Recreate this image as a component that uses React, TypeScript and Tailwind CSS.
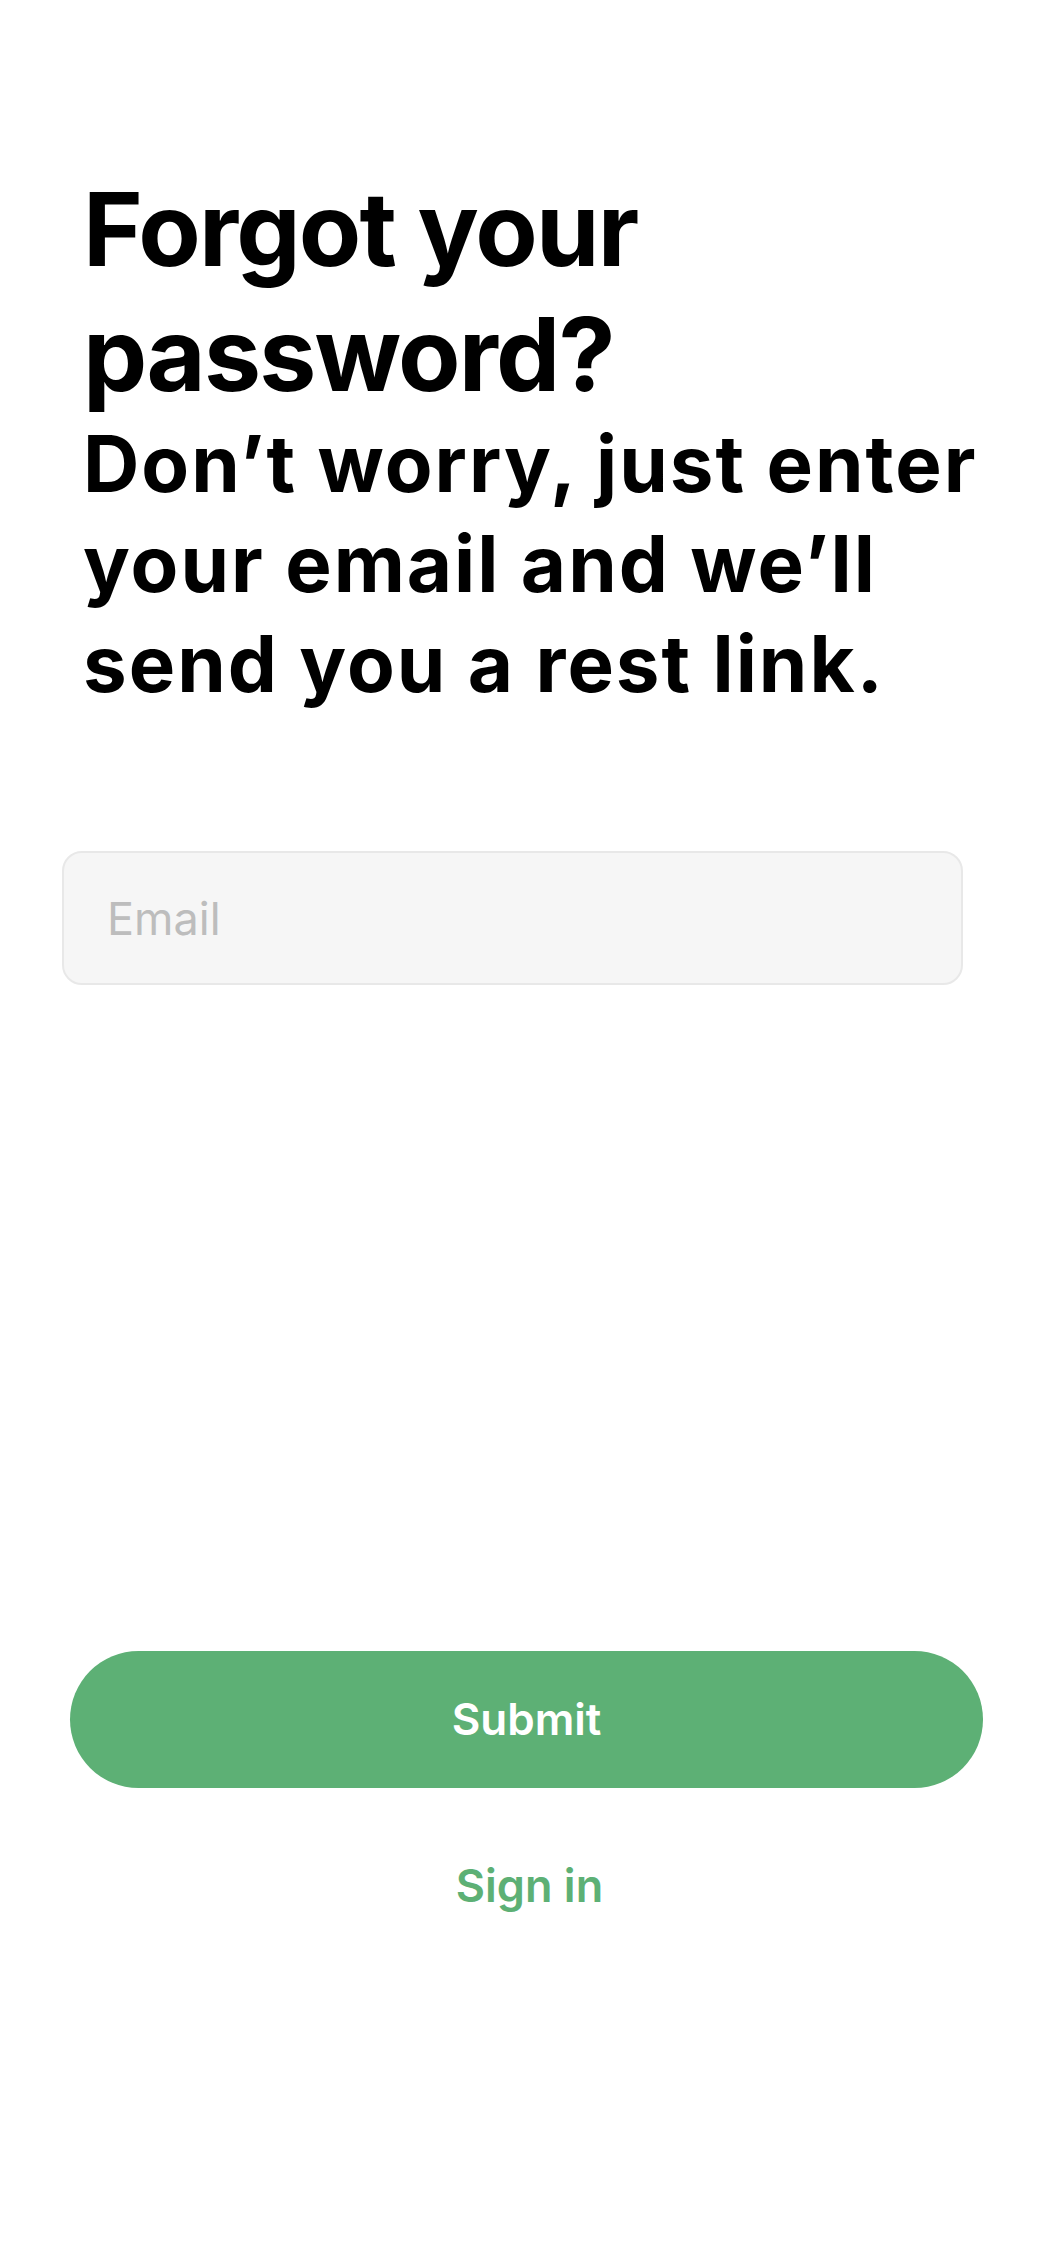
export default function App() {
  return (
    <div className="min-h-screen w-full bg-white font-['Inter','Noto_Sans',sans-serif] text-black">
      <div className="pt-[167px] pl-[83px] pr-[12px]">
        <h1 className="text-[102px] leading-[125px] font-bold tracking-[-1.8px]">
          Forgot your password?
        </h1>
        <p className="-mt-[3px] text-[78px] leading-[100px] font-bold tracking-[2px]">
          Don’t worry, just enter your email and we’ll send you a rest link.
        </p>
      </div>

      <form className="mt-[137px]">
        <div className="pl-[62px] pr-[79px]">
          <input
            type="email"
            placeholder="Email"
            className="h-[134px] w-full rounded-[20px] border-2 border-[#e8e8e8] bg-[#f6f6f6] pl-[43px] text-[45px] text-black outline-none placeholder:text-[#bdbdbd]"
          />
        </div>

        <div className="mt-[666px] flex flex-col items-center pl-[70px] pr-[59px]">
          <button
            type="button"
            className="flex h-[137px] w-full items-center justify-center rounded-full bg-[#5db075] text-[44px] leading-[53px] font-semibold text-white"
          >
            Submit
          </button>
          <a
            href="#"
            className="mt-[71px] pl-[6px] text-[45px] leading-[53px] font-semibold text-[#5db075]"
          >
            Sign in
          </a>
        </div>
      </form>
    </div>
  );
}
